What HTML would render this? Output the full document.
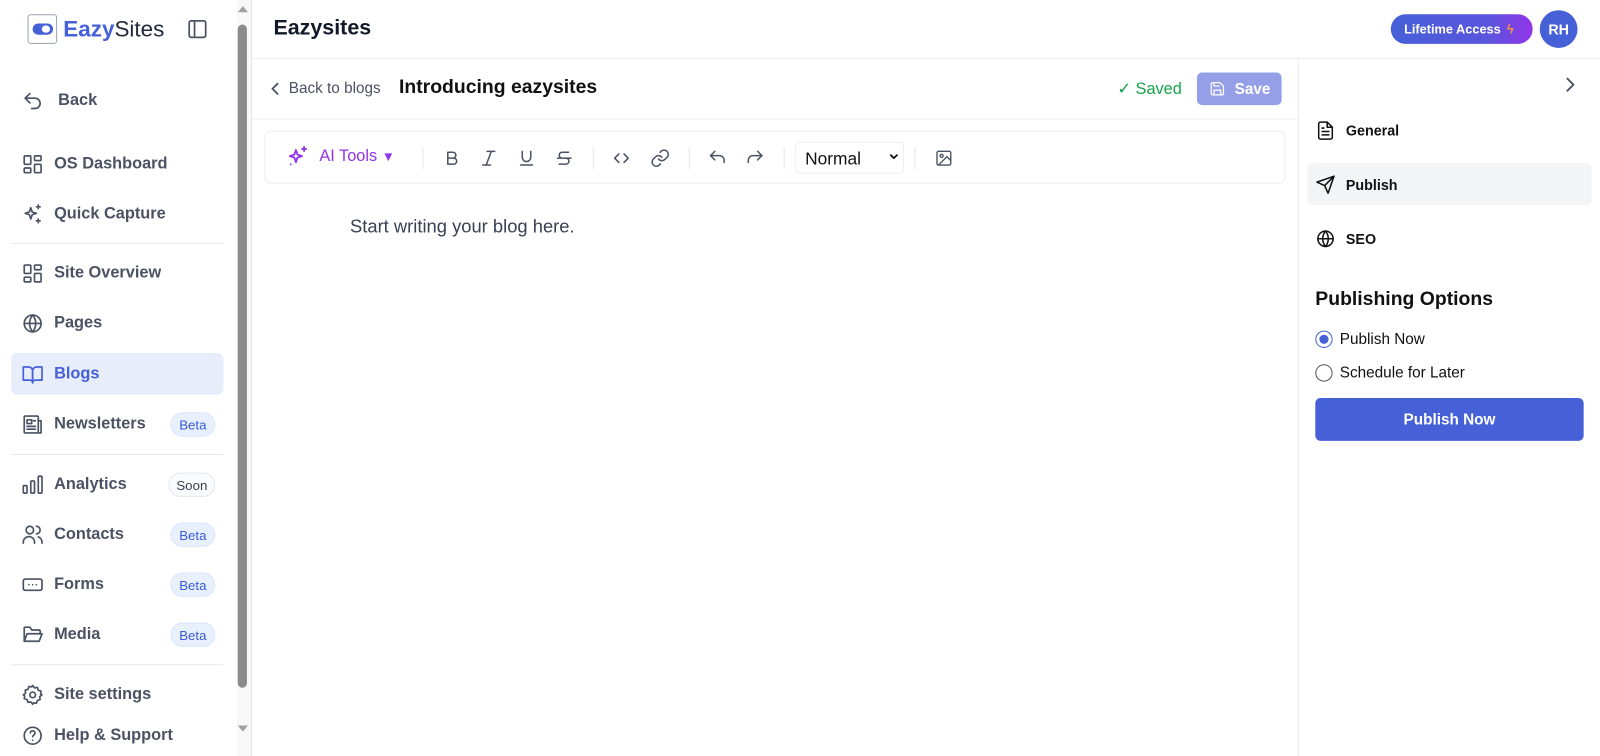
<!DOCTYPE html>
<html><head><meta charset="utf-8"><style>
*{box-sizing:border-box;margin:0;padding:0}
body{width:1600px;height:741px;overflow:hidden;font-family:"Liberation Sans",sans-serif;background:#fff;position:relative;color:#111827}
#w{position:absolute;left:0;top:0;width:1568px;height:726px;transform:scale(1.0204);transform-origin:0 0}
.abs{position:absolute}
svg{fill:none;stroke:currentColor;stroke-width:1.8;stroke-linecap:round;stroke-linejoin:round}
.nav{position:absolute;left:11px;width:208px;height:41px;border-radius:6px;display:flex;align-items:center;color:#4b5263;font-size:16px;font-weight:bold}
.nav svg{width:22px;height:22px;margin-left:10px;margin-right:10px}
.badge{position:absolute;right:8px;top:9px;height:24px;width:44px;border-radius:12px;background:#e8f0fd;border:1px solid #dbe6fa;color:#3b5bd6;font-size:13px;font-weight:normal;display:flex;align-items:center;justify-content:center}
.sep{position:absolute;left:11px;width:208px;height:1px;background:#e5e7eb}
.tb{position:absolute;top:145px;color:#4b5263}
.tb svg{width:20px;height:20px}
.vd{position:absolute;top:144px;width:1px;height:22px;background:#e5e7eb}
.rp{position:absolute;left:1281px;width:279px;height:41px;border-radius:6px;display:flex;align-items:center;font-size:14px;font-weight:bold;color:#111}
.rp svg{width:20px;height:20px;margin-left:8px;margin-right:10px}
</style></head><body><div id="w">
<div class="abs" style="left:27px;top:14px;width:29px;height:29px;border:1px solid #9ca3af;border-radius:3px"></div>
<div class="abs" style="left:32px;top:23px;width:20px;height:11px;border-radius:6px;background:#4660d8"></div>
<div class="abs" style="left:41px;top:25px;width:8px;height:7px;border-radius:4px;background:#fff"></div>
<div class="abs" style="left:62px;top:16px;font-size:22px;color:#1f2937"><b style="color:#4660d8">Eazy</b>Sites</div>
<svg class="abs" style="left:184px;top:19px;width:19px;height:19px;color:#4b5263" viewBox="0 0 20 20"><rect x="1.5" y="1.5" width="17" height="17" rx="2"/><path d="M7 2v16"/></svg>
<div class="nav" style="top:78px;color:#4b5263"><svg viewBox="0 0 24 24"><path d="M9 14L4 9l5-5"/><path d="M4 9h10.5a5.5 5.5 0 010 11H11"/></svg><span style="margin-left:4px">Back</span></div>
<div class="nav" style="top:140px"><svg viewBox="0 0 24 24"><rect x="3" y="3" width="7" height="9" rx="1"/><rect x="14" y="3" width="7" height="5" rx="1"/><rect x="14" y="12" width="7" height="9" rx="1"/><rect x="3" y="16" width="7" height="5" rx="1"/></svg>OS Dashboard</div>
<div class="nav" style="top:189px"><svg viewBox="0 0 24 24"><path d="M10 5l1.5 4.5L16 11l-4.5 1.5L10 17l-1.5-4.5L4 11l4.5-1.5z"/><path d="M18 2v4M16 4h4M18 17v4M16 19h4"/></svg>Quick Capture</div>
<div class="sep" style="top:238px"></div>
<div class="nav" style="top:247px"><svg viewBox="0 0 24 24"><rect x="3" y="3" width="7" height="9" rx="1"/><rect x="14" y="3" width="7" height="5" rx="1"/><rect x="14" y="12" width="7" height="9" rx="1"/><rect x="3" y="16" width="7" height="5" rx="1"/></svg>Site Overview</div>
<div class="nav" style="top:296px"><svg viewBox="0 0 24 24"><circle cx="12" cy="12" r="9"/><path d="M3 12h18M12 3a14 14 0 010 18M12 3a14 14 0 000 18"/></svg>Pages</div>
<div class="nav" style="top:346px;background:#e8edfb;color:#4660d8"><svg viewBox="0 0 24 24"><path d="M2 4h6a4 4 0 014 4v13a3 3 0 00-3-3H2z"/><path d="M22 4h-6a4 4 0 00-4 4v13a3 3 0 013-3h7z"/></svg>Blogs</div>
<div class="nav" style="top:395px"><svg viewBox="0 0 24 24"><rect x="3" y="3" width="15" height="18" rx="1"/><path d="M18 8h3v13h-3M6 7h5v4H6zM13 8h2M6 14h9M6 17h9"/></svg>Newsletters<span class="badge">Beta</span></div>
<div class="sep" style="top:445px"></div>
<div class="nav" style="top:454px"><svg viewBox="0 0 24 24"><rect x="2" y="13" width="4" height="8" rx="1"/><rect x="10" y="8" width="4" height="13" rx="1"/><rect x="18" y="3" width="4" height="18" rx="1"/></svg>Analytics<span class="badge" style="background:#f9fafb;border-color:#e5e7eb;color:#374151;width:46px">Soon</span></div>
<div class="nav" style="top:503px"><svg viewBox="0 0 24 24"><circle cx="9" cy="7" r="4"/><path d="M2 21v-1a6 6 0 0112 0v1M16 3a4 4 0 010 8M22 21v-1a6 6 0 00-4-5.6"/></svg>Contacts<span class="badge">Beta</span></div>
<div class="nav" style="top:552px"><svg viewBox="0 0 24 24"><rect x="2" y="6" width="20" height="12" rx="2"/><path d="M8 12h.01M12 12h.01M16 12h.01"/></svg>Forms<span class="badge">Beta</span></div>
<div class="nav" style="top:601px"><svg viewBox="0 0 24 24"><path d="M3 19V5a1 1 0 011-1h5l2 3h8a1 1 0 011 1v2"/><path d="M3 19l3-8h16l-3 8z"/></svg>Media<span class="badge">Beta</span></div>
<div class="sep" style="top:651px"></div>
<div class="nav" style="top:660px"><svg viewBox="0 0 24 24"><circle cx="12" cy="12" r="3"/><path d="M12 2l2 2.5 3-.5 1 3 3 1-.5 3L22 12l-2.5 2 .5 3-3 1-1 3-3-.5L12 22l-2-2.5-3 .5-1-3-3-1 .5-3L2 12l2.5-2-.5-3 3-1 1-3 3 .5z"/></svg>Site settings</div>
<div class="nav" style="top:700px"><svg viewBox="0 0 24 24"><circle cx="12" cy="12" r="9"/><path d="M9.5 9a2.5 2.5 0 015 .5c0 1.5-2.5 2-2.5 3.5M12 17h.01"/></svg>Help &amp; Support</div>
<div class="abs" style="left:232px;top:0;width:14px;height:741px;background:#f8f8f8"></div>
<div class="abs" style="left:233px;top:24px;width:9px;height:650px;background:#8b8b8b;border-radius:5px"></div>
<div class="abs" style="left:233px;top:6px;width:0;height:0;border-left:5px solid transparent;border-right:5px solid transparent;border-bottom:6px solid #a0a0a0"></div>
<div class="abs" style="left:233px;top:711px;width:0;height:0;border-left:5px solid transparent;border-right:5px solid transparent;border-top:6px solid #a0a0a0"></div>
<div class="abs" style="left:246px;top:0;width:1px;height:741px;background:#e5e7eb"></div>
<div class="abs" style="left:268px;top:16px;font-size:21px;font-weight:bold;color:#111827">Eazysites</div>
<div class="abs" style="left:1363px;top:14px;width:139px;height:29px;border-radius:15px;background:linear-gradient(90deg,#4660d8,#5b55dd 70%,#9333ea);color:#fff;font-size:12.5px;font-weight:bold;display:flex;align-items:center;padding-left:13px">Lifetime Access <span style="color:#fb923c;margin-left:6px">ϟ</span></div>
<div class="abs" style="left:1509px;top:10px;width:37px;height:37px;border-radius:50%;background:#4660d8;color:#fff;font-size:14px;font-weight:bold;display:flex;align-items:center;justify-content:center">RH</div>
<div class="abs" style="left:247px;top:57px;width:1353px;height:1px;background:#eceef1"></div>
<svg class="abs" style="left:264px;top:80px;width:12px;height:14px;color:#4b5263" viewBox="0 0 12 14"><path d="M8 2L3 7l5 5"/></svg>
<div class="abs" style="left:283px;top:78px;font-size:15px;color:#4b5263">Back to blogs</div>
<div class="abs" style="left:391px;top:75px;font-size:19px;font-weight:bold;color:#111">Introducing eazysites</div>
<div class="abs" style="left:1095px;top:77px;font-size:16px;color:#16a34a">✓ Saved</div>
<div class="abs" style="left:1173px;top:71px;width:83px;height:32px;border-radius:5px;background:#959fe8;color:#fff;font-size:15px;font-weight:bold;display:flex;align-items:center;padding-left:12px"><svg style="width:16px;height:16px;margin-right:9px" viewBox="0 0 24 24"><path d="M5 3h11l5 5v11a2 2 0 01-2 2H5a2 2 0 01-2-2V5a2 2 0 012-2z"/><path d="M7 3v5h8M7 21v-7h10v7"/></svg>Save</div>
<div class="abs" style="left:247px;top:116px;width:1025px;height:1px;background:#eceef1"></div>
<div class="abs" style="left:1272px;top:58px;width:1px;height:683px;background:#eceef1"></div>
<div class="abs" style="left:259px;top:128px;width:1001px;height:52px;border:1px solid #eceef1;border-radius:7px"></div>
<svg class="abs" style="left:280px;top:142px;width:24px;height:24px;color:#9333ea" viewBox="0 0 24 24"><path d="M10 5l1.5 4.5L16 11l-4.5 1.5L10 17l-1.5-4.5L4 11l4.5-1.5z"/><path d="M18 2v4M16 4h4M5 19h.01"/></svg>
<div class="abs" style="left:313px;top:145px;font-size:16px;color:#9333ea">AI Tools <span style="font-size:13px">▼</span></div>
<div class="vd" style="left:414px"></div>
<div class="tb" style="left:433px"><svg viewBox="0 0 24 24"><path d="M7 5h6a3.5 3.5 0 010 7H7zM7 12h7a3.5 3.5 0 010 7H7z"/></svg></div>
<div class="tb" style="left:469px"><svg viewBox="0 0 24 24"><path d="M10 4h9M5 20h9M15 4L9 20"/></svg></div>
<div class="tb" style="left:506px"><svg viewBox="0 0 24 24"><path d="M7 4v7a5 5 0 0010 0V4M5 20h14"/></svg></div>
<div class="tb" style="left:543px"><svg viewBox="0 0 24 24"><path d="M17 5H9.5a3.5 3.5 0 000 7H14a3.5 3.5 0 010 7H6M4 12h16"/></svg></div>
<div class="vd" style="left:581px"></div>
<div class="tb" style="left:599px"><svg viewBox="0 0 24 24"><path d="M9 7l-5 5 5 5M15 7l5 5-5 5"/></svg></div>
<div class="tb" style="left:637px"><svg viewBox="0 0 24 24"><path d="M10 13a5 5 0 007.5.5l3-3a5 5 0 00-7-7l-1.7 1.7"/><path d="M14 11a5 5 0 00-7.5-.5l-3 3a5 5 0 007 7l1.7-1.7"/></svg></div>
<div class="vd" style="left:675px"></div>
<div class="tb" style="left:693px"><svg viewBox="0 0 24 24"><path d="M9 14L4 9l5-5"/><path d="M4 9h10.5a5.5 5.5 0 015.5 5.5V17"/></svg></div>
<div class="tb" style="left:730px"><svg viewBox="0 0 24 24"><path d="M15 14l5-5-5-5"/><path d="M20 9H9.5A5.5 5.5 0 004 14.5V17"/></svg></div>
<div class="vd" style="left:768px"></div>
<div class="abs" style="left:779px;top:139px;width:107px;height:31px;border:1px solid #eceef1;border-radius:4px;font-size:17px;color:#111;padding:6px 0 0 9px">Normal</div>
<svg class="abs" style="left:871px;top:150px;width:10px;height:8px;color:#111" viewBox="0 0 10 8"><path d="M2 2l3 3 3-3"/></svg>
<div class="vd" style="left:896px"></div>
<div class="tb" style="left:916px;top:146px"><svg style="width:18px;height:18px" viewBox="0 0 24 24"><rect x="3" y="3" width="18" height="18" rx="2"/><circle cx="9" cy="9" r="2"/><path d="M21 15l-5-5L5 21"/></svg></div>
<div class="abs" style="left:343px;top:212px;font-size:18px;color:#374151">Start writing your blog here.</div>
<svg class="abs" style="left:1532px;top:74px;width:14px;height:18px;color:#4b5263" viewBox="0 0 14 18"><path d="M4 3l6 6-6 6"/></svg>
<div class="rp" style="top:107px"><svg viewBox="0 0 24 24"><path d="M14 2H6a2 2 0 00-2 2v16a2 2 0 002 2h12a2 2 0 002-2V8z"/><path d="M14 2v6h6M8 13h8M8 17h8M8 9h2"/></svg>General</div>
<div class="rp" style="top:160px;background:#f3f4f6"><svg viewBox="0 0 24 24"><path d="M22 2L11 13M22 2l-7 20-4-9-9-4z"/></svg>Publish</div>
<div class="rp" style="top:213px"><svg viewBox="0 0 24 24"><circle cx="12" cy="12" r="9"/><path d="M3 12h18M12 3a14 14 0 010 18M12 3a14 14 0 000 18"/></svg>SEO</div>
<div class="abs" style="left:1289px;top:283px;font-size:19px;font-weight:bold;color:#111">Publishing Options</div>
<div class="abs" style="left:1289px;top:324px;width:17px;height:17px;border-radius:50%;border:1.5px solid #4660d8"></div>
<div class="abs" style="left:1293px;top:328px;width:9px;height:9px;border-radius:50%;background:#4660d8"></div>
<div class="abs" style="left:1313px;top:324px;font-size:15px;color:#111">Publish Now</div>
<div class="abs" style="left:1289px;top:357px;width:17px;height:17px;border-radius:50%;border:1.5px solid #555"></div>
<div class="abs" style="left:1313px;top:357px;font-size:15px;color:#111">Schedule for Later</div>
<div class="abs" style="left:1289px;top:390px;width:263px;height:42px;border-radius:5px;background:#4660d8;color:#fff;font-size:15px;font-weight:bold;display:flex;align-items:center;justify-content:center">Publish Now</div>
</div></body></html>
